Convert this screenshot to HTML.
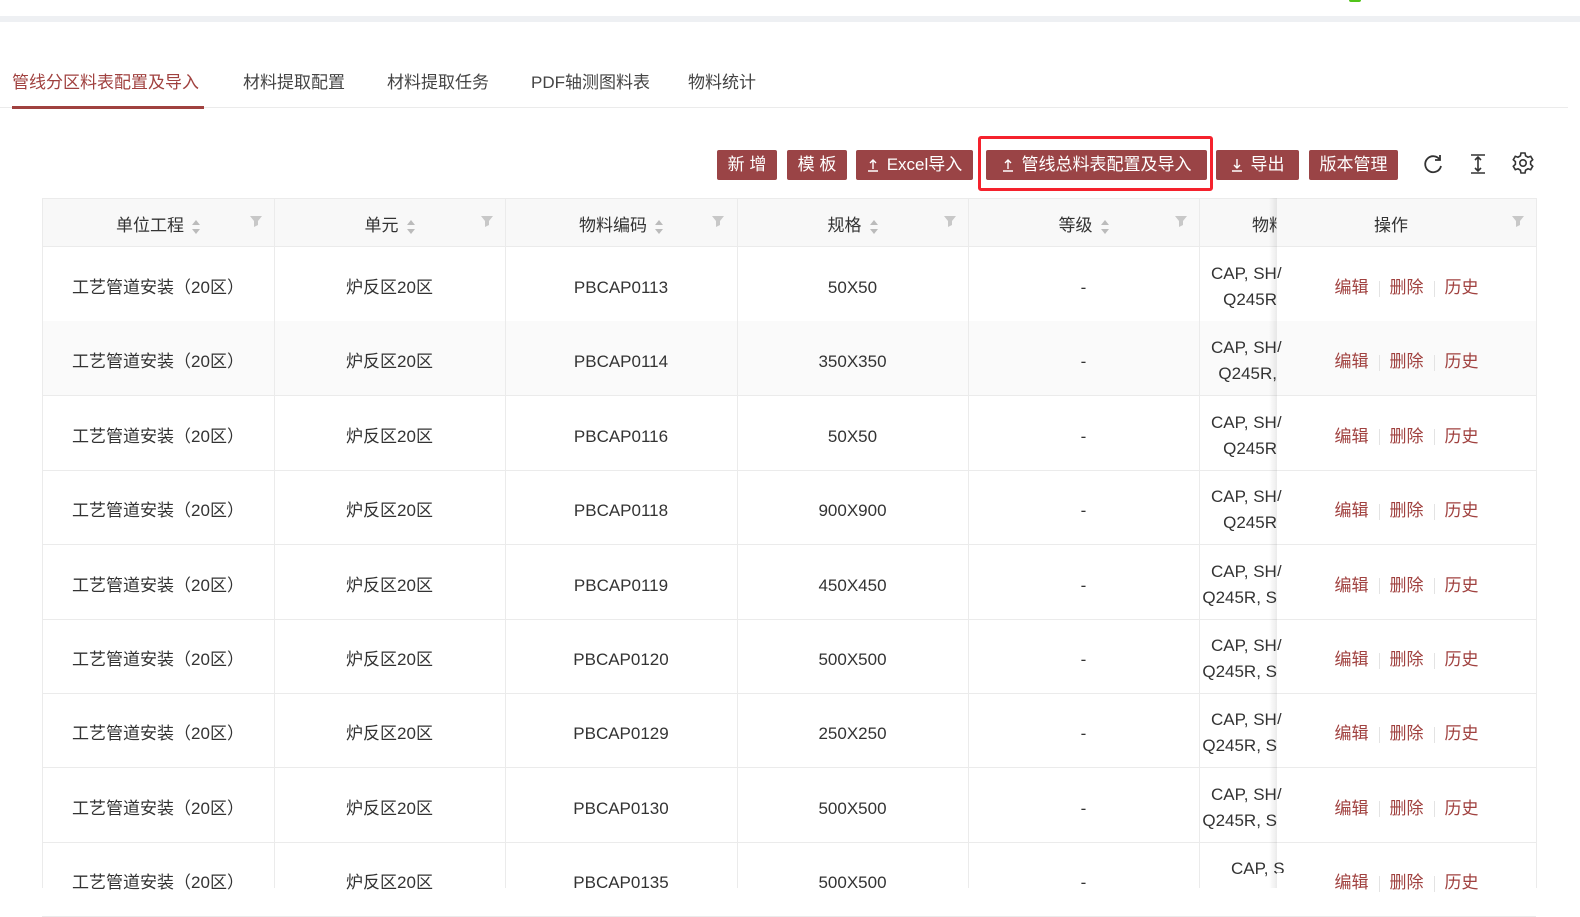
<!DOCTYPE html>
<html><head><meta charset="utf-8"><style>
*{margin:0;padding:0;box-sizing:border-box}
body{width:1580px;height:888px;overflow:hidden;background:#fff;font-family:"Liberation Sans","Noto Sans CJK SC",sans-serif;color:#333;position:relative}
.a{position:absolute}
.tab{position:absolute;top:72px;font-size:17px;line-height:22px;color:#444}
.btn{position:absolute;top:150px;height:30px;background:#9a4446;color:#fff;font-size:17px;line-height:30px;text-align:center;border-radius:2px;white-space:nowrap}
.btn svg{vertical-align:-2px;margin-right:8px}
.hd{position:absolute;top:198px;height:49px;background:#f8f8f8;border-bottom:1px solid #ebebeb}
.cell{position:absolute;font-size:17px;line-height:20px;color:#333;text-align:center;white-space:nowrap}
.vl{position:absolute;width:1px;background:#ebebeb}
.hl{position:absolute;height:1px;background:#ebebeb;left:42px;width:1494px}
.sort{display:inline-block;vertical-align:middle;margin-left:8px;width:8px;height:14px;position:relative}
.sort:before{content:"";position:absolute;top:0;left:0;border:4px solid transparent;border-bottom:5px solid #bbb;border-top:0}
.sort:after{content:"";position:absolute;bottom:0;left:0;border:4px solid transparent;border-top:5px solid #bbb;border-bottom:0}
.flt{position:absolute;top:216px;width:12px;height:12px}
.lk{color:#a0413f}
.sep{display:inline-block;width:1px;height:16px;background:#e3e3e3;margin:0 10px;vertical-align:middle}
</style></head><body>
<div class="a" style="left:0;top:0;width:1580px;height:16px;background:#fff"></div>
<div class="a" style="left:0;top:16px;width:1580px;height:6px;background:#eef0f3"></div>
<div class="a" style="left:1349px;top:0;width:12px;height:2px;background:#52c41a;border-radius:0 0 6px 6px"></div>

<div class="tab" style="left:12px;color:#a0413f">管线分区料表配置及导入</div>
<div class="tab" style="left:243px">材料提取配置</div>
<div class="tab" style="left:387px">材料提取任务</div>
<div class="tab" style="left:531px">PDF轴测图料表</div>
<div class="tab" style="left:688px">物料统计</div>
<div class="a" style="left:0;top:107px;width:1568px;height:1px;background:#ebebeb"></div>
<div class="a" style="left:12px;top:106px;width:192px;height:3px;background:#a0413f"></div>

<div class="btn" style="left:717px;width:60px">新 增</div>
<div class="btn" style="left:787px;width:60px">模 板</div>
<div class="btn" style="left:856px;width:117px"><svg width="12" height="14" viewBox="0 0 12 14" fill="none" stroke="#fff" stroke-width="1.4"><path d="M6 11V2M3 5l3-3 3 3M1 13h10"/></svg>Excel导入</div>
<div class="btn" style="left:986px;width:221px"><svg width="12" height="14" viewBox="0 0 12 14" fill="none" stroke="#fff" stroke-width="1.4"><path d="M6 11V2M3 5l3-3 3 3M1 13h10"/></svg>管线总料表配置及导入</div>
<div class="a" style="left:978px;top:136px;width:235px;height:55px;border:3px solid #f5222d;border-radius:3px"></div>
<div class="btn" style="left:1216px;width:83px"><svg width="12" height="14" viewBox="0 0 12 14" fill="none" stroke="#fff" stroke-width="1.4"><path d="M6 1v9M3 7l3 3 3-3M1 13h10"/></svg>导出</div>
<div class="btn" style="left:1309px;width:89px">版本管理</div>
<svg class="a" style="left:1421px;top:152px" width="24" height="24" viewBox="0 0 24 24" fill="none" stroke="#333" stroke-width="1.8"><path d="M19 8A8 8 0 1 0 20 14"/><path d="M19 3v5h-5"/></svg>
<svg class="a" style="left:1467px;top:152px" width="22" height="24" viewBox="0 0 22 24" fill="none" stroke="#333" stroke-width="1.6"><path d="M4 3h14M4 21h14M11 5v14M8 8l3-3 3 3M8 16l3 3 3-3"/></svg>
<svg class="a" style="left:1511px;top:151px" width="24" height="24" viewBox="0 0 24 24" fill="none" stroke="#333" stroke-width="1.6"><circle cx="12" cy="12" r="3.2"/><path d="M10 2h4l.6 2.8 2.4 1.4 2.7-.9 2 3.4-2.1 1.9v2.8l2.1 1.9-2 3.4-2.7-.9-2.4 1.4L14 22h-4l-.6-2.8-2.4-1.4-2.7.9-2-3.4 2.1-1.9v-2.8L2.3 8.7l2-3.4 2.7.9 2.4-1.4z"/></svg>

<div class="hd" style="left:42px;width:1494px;border-top:1px solid #ebebeb"></div>
<div class="cell" style="left:42px;width:232px;top:216px">单位工程<span class="sort"></span></div>
<div class="cell" style="left:274px;width:231px;top:216px">单元<span class="sort"></span></div>
<div class="cell" style="left:505px;width:232px;top:216px">物料编码<span class="sort"></span></div>
<div class="cell" style="left:737px;width:231px;top:216px">规格<span class="sort"></span></div>
<div class="cell" style="left:968px;width:231px;top:216px">等级<span class="sort"></span></div>
<div class="cell" style="left:1252px;top:216px">物料</div>

<div id="rows"></div>
<script>
var d=[["PBCAP0113","50X50","Q245R"],["PBCAP0114","350X350","Q245R,"],["PBCAP0116","50X50","Q245R"],["PBCAP0118","900X900","Q245R"],["PBCAP0119","450X450","Q245R, S"],["PBCAP0120","500X500","Q245R, S"],["PBCAP0129","250X250","Q245R, S"],["PBCAP0130","500X500","Q245R, S"],["PBCAP0135","500X500",""]];
var h="";
d.forEach(function(r,i){var t=247+i*74.4,c=t+31;
if(i==1)h+='<div class="a" style="left:42px;top:'+t+'px;width:1494px;height:74px;background:#fafafa"></div>';
h+='<div class="hl" style="top:'+(t+74)+'px"></div>';
h+='<div class="cell" style="left:42px;width:232px;top:'+c+'px">工艺管道安装（20区）</div>';
h+='<div class="cell" style="left:274px;width:231px;top:'+c+'px">炉反区20区</div>';
h+='<div class="cell" style="left:505px;width:232px;top:'+c+'px">'+r[0]+'</div>';
h+='<div class="cell" style="left:737px;width:231px;top:'+c+'px">'+r[1]+'</div>';
h+='<div class="cell" style="left:968px;width:231px;top:'+c+'px">-</div>';
if(r[2]){h+='<div class="cell" style="left:1211px;top:'+(t+17)+'px">CAP, SH/</div>';
h+='<div class="cell" style="right:'+(1580-1277)+'px;top:'+(t+43)+'px;text-align:right">'+r[2]+'</div>';}
else h+='<div class="cell" style="left:1231px;top:'+(t+17)+'px">CAP, S</div>';
h+='<div class="cell lk" style="left:1277px;width:259px;top:'+c+'px;background:'+(i==1?'#fafafa':'#fff')+'">编辑<span class="sep"></span>删除<span class="sep"></span>历史</div>';
});
document.getElementById("rows").innerHTML=h;
</script>
<div class="a" style="left:1277px;top:198px;width:259px;height:49px;background:#f8f8f8;border-top:1px solid #ebebeb;border-bottom:1px solid #ebebeb"></div>
<div class="cell" style="left:1277px;width:228px;top:216px">操作</div>
<div class="a" style="left:1269px;top:198px;width:8px;height:690px;background:linear-gradient(to right,rgba(0,0,0,0),rgba(0,0,0,0.08))"></div>
<div class="vl" style="left:42px;top:198px;height:690px"></div>
<div class="vl" style="left:274px;top:198px;height:690px"></div>
<div class="vl" style="left:505px;top:198px;height:690px"></div>
<div class="vl" style="left:737px;top:198px;height:690px"></div>
<div class="vl" style="left:968px;top:198px;height:690px"></div>
<div class="vl" style="left:1199px;top:198px;height:690px"></div>
<div class="vl" style="left:1536px;top:198px;height:690px"></div>
<svg class="flt" style="left:250px" viewBox="0 0 12 12"><path d="M0 0h12L8 5v4L4 11V5z" fill="#c8c8c8"/></svg>
<svg class="flt" style="left:481px" viewBox="0 0 12 12"><path d="M0 0h12L8 5v4L4 11V5z" fill="#c8c8c8"/></svg>
<svg class="flt" style="left:712px" viewBox="0 0 12 12"><path d="M0 0h12L8 5v4L4 11V5z" fill="#c8c8c8"/></svg>
<svg class="flt" style="left:944px" viewBox="0 0 12 12"><path d="M0 0h12L8 5v4L4 11V5z" fill="#c8c8c8"/></svg>
<svg class="flt" style="left:1175px" viewBox="0 0 12 12"><path d="M0 0h12L8 5v4L4 11V5z" fill="#c8c8c8"/></svg>
<svg class="flt" style="left:1512px" viewBox="0 0 12 12"><path d="M0 0h12L8 5v4L4 11V5z" fill="#c8c8c8"/></svg>
</body></html>
